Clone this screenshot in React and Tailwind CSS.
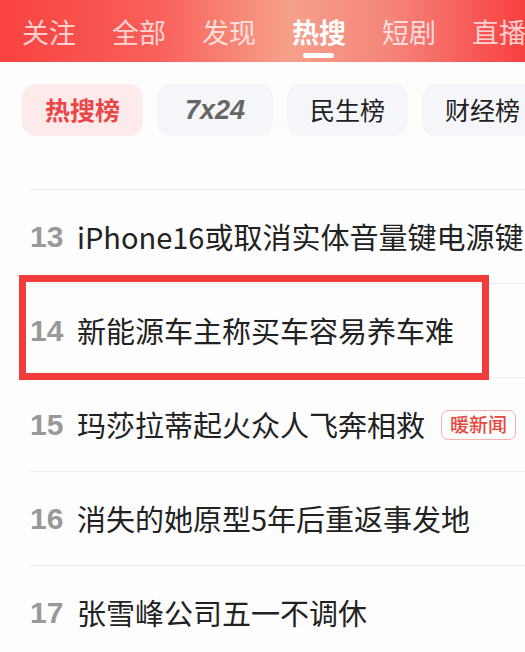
import React from 'react';

const tabs = ['关注', '全部', '发现', '热搜', '短剧', '直播'];

const chips = [
  { label: '热搜榜', active: true },
  { label: '7x24', italic: true },
  { label: '民生榜' },
  { label: '财经榜' },
];

const rows = [
  { n: 13, text: 'iPhone16或取消实体音量键电源键' },
  { n: 14, text: '新能源车主称买车容易养车难', boxed: true },
  { n: 15, text: '玛莎拉蒂起火众人飞奔相救', tag: '暖新闻' },
  { n: 16, text: '消失的她原型5年后重返事发地' },
  { n: 17, text: '张雪峰公司五一不调休' },
];

const cjk = { fontFamily: '"Noto Sans CJK SC", "Noto Sans", sans-serif' };

export default function App() {
  return (
    <div className="w-[525px] h-[652px] overflow-hidden bg-[#fdfdfd] relative" style={cjk}>
      {/* Header tabs */}
      <div className="h-[62px] bg-[linear-gradient(90deg,#f8423f_0%,#f9605a_30%,#f6a08a_55%,#f5837a_75%,#f83f3f_100%)] flex items-center gap-[36px] pl-[22px] whitespace-nowrap overflow-hidden">
        {tabs.map((t) => (
          <div key={t} className="relative shrink-0 w-[54px] flex justify-center">
            <span
              className={`text-[27px] leading-none ${
                t === '热搜' ? 'text-white font-bold' : 'text-white/75'
              }`}
            >
              {t}
            </span>
            {t === '热搜' && (
              <span className="absolute left-[11px] top-[35px] w-[31px] h-[5px] rounded-full bg-white" />
            )}
          </div>
        ))}
      </div>

      {/* Chips */}
      <div className="flex gap-[14px] pl-[22px] mt-[22px] whitespace-nowrap">
        {chips.map((c) => (
          <div
            key={c.label}
            className={`shrink-0 h-[52px] px-[23px] rounded-[14px] flex items-center justify-center text-[25px] ${
              c.active
                ? 'bg-[#fdeaea] text-[#ea4646] font-bold'
                : c.italic
                ? 'bg-[#f5f6f9] text-[#666] font-bold italic w-[116px] text-[27px]'
                : 'bg-[#f5f6f9] text-[#222]'
            }`}
            style={c.italic ? { fontFamily: '"Liberation Sans", Arial, sans-serif' } : undefined}
          >
            {c.label}
          </div>
        ))}
      </div>

      {/* List */}
      <div className="mt-[53px]">
        {rows.map((r) => (
          <div
            key={r.n}
            className="h-[94px] border-t border-[#eeeeee] ml-[30px] flex items-center whitespace-nowrap"
          >
            <span
              className="text-[30px] font-bold text-[#999] w-[47px] shrink-0"
              style={{ fontFamily: '"Liberation Sans", Arial, sans-serif' }}
            >
              {r.n}
            </span>
            <span className="text-[29px] text-[#222] leading-none">{r.text}</span>
            {r.tag && (
              <span className="ml-[16px] h-[30px] px-[8px] rounded-[7px] border border-[#f2b1aa] text-[#e8473e] text-[19px] font-medium flex items-center">
                {r.tag}
              </span>
            )}
          </div>
        ))}
      </div>

      {/* Highlight box */}
      <div className="absolute left-[19px] top-[275px] w-[470px] h-[105px] border-[7px] border-[#f23c3c]" />
    </div>
  );
}
